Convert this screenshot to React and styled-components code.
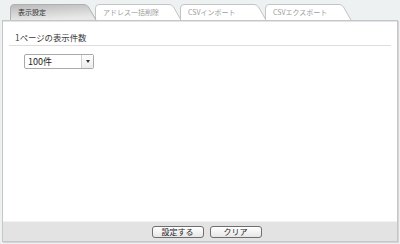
import React from 'react';
import styled, {createGlobalStyle} from 'styled-components';

const GlobalStyle = createGlobalStyle`
  body {
    margin: 0;
    font-family: "Noto Sans CJK JP", "Noto Sans", sans-serif;
  }
`;

const Page = styled.div`
  width: 400px;
  height: 244px;
  box-sizing: border-box;
  padding-top: 4px;
  background: #eef1f1;
  display: flex;
  flex-direction: column;
`;

const TabBar = styled.div`
  display: flex;
  height: 16px;
  padding-left: 10px;
`;

const Tab = styled.div`
  position: relative;
  width: 88px;
  height: 16px;
  margin-right: -3px;
  z-index: ${props => (props.active ? 2 : 1)};
`;

const TabShape = styled.svg`
  position: absolute;
  left: 0;
  top: 0;
`;

const TabLabel = styled.span`
  position: relative;
  display: block;
  padding-left: 8px;
  line-height: 16px;
  font-size: 7px;
  color: ${props => (props.active ? '#333' : '#9c9c9c')};
`;

const Panel = styled.div`
  flex: 1;
  margin: 0 2px 2px 2px;
  background: #fff;
  border: 1px solid #c6c6c6;
  box-shadow: inset 0 1px 0 #e4e4e4, 1px 1px 0 #d6d6d6;
  display: flex;
  flex-direction: column;
`;

const Content = styled.div`
  flex: 1;
  padding: 10px 6px 0;
`;

const SectionTitle = styled.h2`
  margin: 0;
  height: 14px;
  padding-left: 6px;
  font-size: 8.4px;
  font-weight: normal;
  line-height: 13px;
  color: #3a3a3a;
  border-bottom: 1px solid #dedede;
`;

const Select = styled.div`
  display: flex;
  width: 70px;
  height: 15px;
  box-sizing: border-box;
  margin: 8px 0 0 15px;
  border: 1px solid #a9a9a9;
  border-radius: 2px;
  background: #fff;
`;

const SelectValue = styled.span`
  flex: 1;
  padding-left: 3px;
  font-size: 9px;
  line-height: 13px;
  color: #222;
`;

const SelectArrow = styled.span`
  width: 11px;
  border-left: 1px solid #cfcfcf;
  background: linear-gradient(#ffffff, #ececec);
  display: flex;
  align-items: center;
  justify-content: center;

  &::after {
    content: '';
    border-left: 2px solid transparent;
    border-right: 2px solid transparent;
    border-top: 3px solid #333;
  }
`;

const Footer = styled.div`
  height: 19px;
  background: #e3e3e3;
  border-top: 1px solid #f2f2f2;
  display: flex;
  align-items: center;
  justify-content: center;
  gap: 6px;
  padding-left: 13px;
`;

const Button = styled.button`
  width: 52px;
  height: 12px;
  padding: 0;
  border: 1px solid #6e6e6e;
  border-radius: 3px;
  background: linear-gradient(#ffffff, #e6e6e6);
  font-family: inherit;
  font-size: 8px;
  line-height: 10px;
  color: #222;
`;

const tabs = ['表示設定', 'アドレス一括削除', 'CSVインポート', 'CSVエクスポート'];

const TabOutline = ({active}) => (
  <TabShape width="88" height="16" viewBox="0 0 88 16">
    <defs>
      <linearGradient id="activeTab" x1="0" y1="0" x2="0.3" y2="1">
        <stop offset="0" stopColor="#b9b9b9" />
        <stop offset="1" stopColor="#e9e9e9" />
      </linearGradient>
    </defs>
    <path
      d="M0.5 16 L0.5 4 Q0.5 0.5 4 0.5 L74 0.5 Q77 0.5 78.5 3 L86 16"
      fill={active ? 'url(#activeTab)' : '#fff'}
      stroke={active ? '#b0b0b0' : '#c4c4c4'}
      strokeWidth="1"
    />
  </TabShape>
);

const App = () => {
  return (
    <Page>
      <GlobalStyle />
      <TabBar>
        {tabs.map((label, i) => (
          <Tab key={label} active={i === 0}>
            <TabOutline active={i === 0} />
            <TabLabel active={i === 0}>{label}</TabLabel>
          </Tab>
        ))}
      </TabBar>
      <Panel>
        <Content>
          <SectionTitle>1ページの表示件数</SectionTitle>
          <Select>
            <SelectValue>100件</SelectValue>
            <SelectArrow />
          </Select>
        </Content>
        <Footer>
          <Button>設定する</Button>
          <Button>クリア</Button>
        </Footer>
      </Panel>
    </Page>
  );
};

export default App;
